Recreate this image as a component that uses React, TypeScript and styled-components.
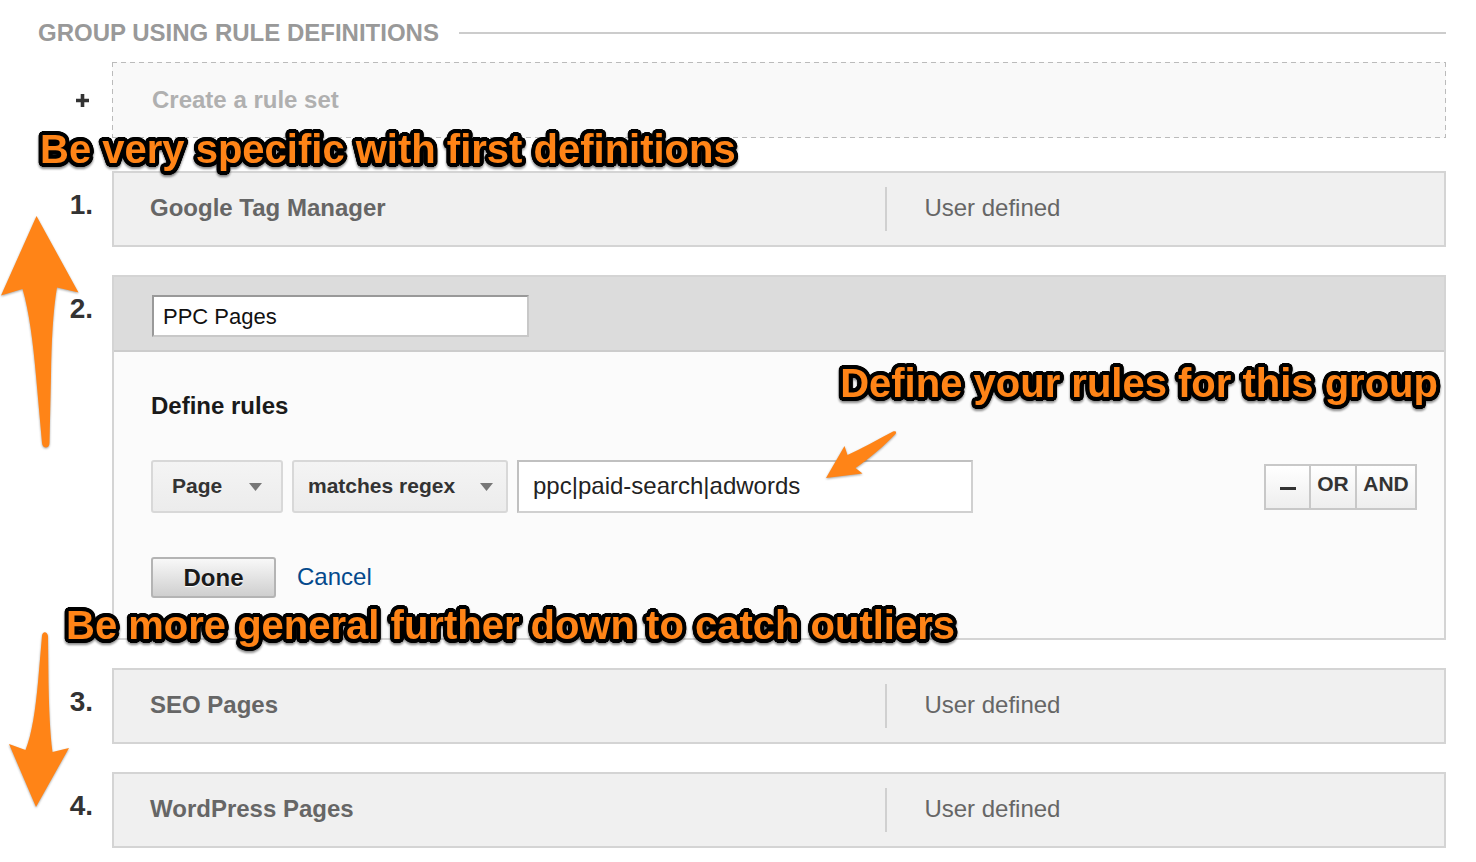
import React from "react";
import styled, { createGlobalStyle } from "styled-components";

const GlobalStyle = createGlobalStyle`
  *, *::before, *::after { box-sizing: border-box; }
  body {
    margin: 0;
    background: #fff;
    font-family: "Liberation Sans", Arial, Helvetica, sans-serif;
    color: #333;
  }
  button, input, select { font-family: inherit; margin: 0; }
`;

const Page = styled.main`
  position: relative;
  padding: 17px 30px 13px 38px;
`;

const SectionHeader = styled.header`
  display: flex;
  align-items: center;
  gap: 20px;
  margin-bottom: 13px;
  &::after {
    content: "";
    flex: 1;
    height: 2px;
    background: #ccc;
  }
`;

const SectionTitle = styled.h2`
  margin: 0;
  font-size: 24px;
  line-height: 32px;
  font-weight: bold;
  color: #999;
  text-transform: uppercase;
`;

const RuleList = styled.ol`
  list-style: none;
  margin: 0;
  padding: 0;
  display: flex;
  flex-direction: column;
  gap: 28px;
`;

const RuleItem = styled.li`
  position: relative;
  display: grid;
  grid-template-columns: 74px minmax(0, 1fr);
`;

const CreateItem = styled.div`
  position: relative;
  display: grid;
  grid-template-columns: 74px minmax(0, 1fr);
  margin-bottom: 33px;
`;

const Marker = styled.span`
  padding: 18px 19px 0 0;
  font-size: 28px;
  line-height: 32px;
  font-weight: bold;
  text-align: right;
  color: #333;
`;

const PlusIcon = styled.svg`
  width: 13px;
  height: 13px;
  margin-right: 23px;
  justify-self: end;
  align-self: center;
  fill: #333;
`;

const dashes = (direction: string) =>
  `repeating-linear-gradient(${direction}, #bbb 0 5px, transparent 5px 9px)`;

const CreateButton = styled.button`
  height: 76px;
  padding: 0 40px;
  border: 0;
  background:
    ${dashes("to right")} top / 100% 1px no-repeat,
    ${dashes("to right")} bottom / 100% 1px no-repeat,
    ${dashes("to bottom")} left / 1px 100% no-repeat,
    ${dashes("to bottom")} right / 1px 100% no-repeat,
    #f9f9f9;
  font-size: 24px;
  font-weight: bold;
  text-align: left;
  color: #b0b0b0;
`;

const RuleCard = styled.div`
  display: grid;
  grid-template-columns: 58fr 42fr;
  align-items: center;
  height: 76px;
  border: 2px solid #d4d4d4;
  background: #f0f0f0;
  font-size: 24px;
  line-height: 42px;
  color: #666;
`;

const RuleName = styled.strong`
  height: 44px;
  padding-left: 36px;
`;

const RuleKind = styled.span`
  height: 44px;
  padding-left: 37px;
  border-left: 2px solid #d0d0d0;
`;

const Editor = styled.form`
  border: 2px solid #d4d4d4;
  background: #fbfbfb;
`;

const EditorHeader = styled.div`
  height: 75px;
  padding: 18px 38px 0;
  border-bottom: 2px solid #ccc;
  background: #dcdcdc;
`;

const NameInput = styled.input`
  display: block;
  width: 377px;
  max-width: 100%;
  height: 42px;
  padding: 2px 9px 0;
  border: 2px solid;
  border-color: #999 #c8c8c8 #c8c8c8 #999;
  background: #fff;
  font-size: 22px;
  color: #111;
`;

const EditorBody = styled.div`
  padding: 38px 27px 40px 37px;
`;

const EditorTitle = styled.h3`
  margin: 0 0 38px;
  font-size: 24px;
  line-height: 32px;
  color: #1a1a1a;
`;

const RuleRow = styled.div`
  display: flex;
  align-items: center;
  gap: 9px;
  margin-bottom: 44px;
`;

const SelectBox = styled.span<{ $width: number }>`
  position: relative;
  flex: 0 1 ${(p) => p.$width}px;
`;

const Select = styled.select<{ $inset: number }>`
  appearance: none;
  display: block;
  width: 100%;
  height: 53px;
  padding: 0 24px 2px ${(p) => p.$inset}px;
  border: 2px solid #d8d8d8;
  border-radius: 3px;
  background: linear-gradient(#f4f4f4, #ececec);
  font-size: 21px;
  font-weight: bold;
  color: #333;
`;

const Caret = styled.svg<{ $inset: number }>`
  position: absolute;
  right: ${(p) => p.$inset}px;
  top: 23px;
  width: 13px;
  height: 8px;
  fill: #777;
  pointer-events: none;
`;

const PatternInput = styled.input`
  flex: 0 1 456px;
  min-width: 0;
  height: 53px;
  padding: 0 14px 2px;
  border: 2px solid;
  border-color: #c0c0c0 #d0d0d0 #d0d0d0 #c0c0c0;
  background: #fff;
  font-size: 24px;
  color: #222;
`;

const Operators = styled.div`
  display: flex;
  margin-left: auto;
  border: 2px solid #c8c8c8;
`;

const OperatorButton = styled.button<{ $width: number }>`
  width: ${(p) => p.$width}px;
  height: 42px;
  padding: 0 0 6px;
  border: 0;
  background: linear-gradient(#fff, #eee);
  font-size: 21px;
  font-weight: bold;
  color: #333;
  & + & { border-left: 2px solid #c8c8c8; }
`;

const MinusIcon = styled.svg`
  display: block;
  width: 16px;
  height: 4px;
  margin: 8px auto 0;
  fill: #333;
`;

const Actions = styled.div`
  display: flex;
  align-items: center;
  gap: 21px;
`;

const DoneButton = styled.button`
  width: 125px;
  height: 41px;
  padding: 0;
  border: 2px solid #b4b4b4;
  border-radius: 3px;
  background: linear-gradient(#f8f8f8, #cfcfcf);
  font-size: 24px;
  font-weight: bold;
  color: #1a1a1a;
  text-shadow: 0 1px 1px #fff;
`;

const CancelLink = styled.a`
  font-size: 24px;
  line-height: 38px;
  padding-bottom: 2px;
  color: #04498c;
  text-decoration: none;
`;

/* Rings of black shadows give the callout letters a thick, round outline. */
const outline = [2, 4]
  .flatMap((radius) =>
    Array.from({ length: 24 }, (_, i) => {
      const angle = (i * Math.PI) / 12;
      return `${(radius * Math.cos(angle)).toFixed(2)}px ${(radius * Math.sin(angle)).toFixed(2)}px 0 #000`;
    })
  )
  .join(", ");

const Callout = styled.p<{ $left?: number; $right?: number; $top: number }>`
  position: absolute;
  z-index: 2;
  top: ${(p) => p.$top}px;
  left: ${(p) => (p.$left === undefined ? "auto" : `${p.$left}px`)};
  right: ${(p) => (p.$right === undefined ? "auto" : `${p.$right}px`)};
  margin: 0;
  font-size: 40px;
  line-height: 48px;
  font-weight: bold;
  white-space: nowrap;
  color: #ff8417;
  text-shadow: ${outline};
  filter: drop-shadow(0 2px 1px rgba(0, 0, 0, 0.45));
  pointer-events: none;
`;

const Arrow = styled.svg<{ $left: number; $top: number }>`
  position: absolute;
  z-index: 1;
  left: ${(p) => p.$left}px;
  top: ${(p) => p.$top}px;
  fill: #ff8417;
  overflow: visible;
  filter: drop-shadow(0 1px 1px rgba(0, 0, 0, 0.35));
  pointer-events: none;
`;

type DropdownProps = {
  label: string;
  value: string;
  width: number;
  inset: number;
  caretInset: number;
};

function Dropdown({ label, value, width, inset, caretInset }: DropdownProps) {
  return (
    <SelectBox $width={width}>
      <Select aria-label={label} defaultValue={value} $inset={inset}>
        <option>{value}</option>
      </Select>
      <Caret $inset={caretInset} viewBox="0 0 13 8" aria-hidden="true">
        <path d="M0 0H13L6.5 8Z" />
      </Caret>
    </SelectBox>
  );
}

function SavedRule({ index, name, children }: { index: number; name: string; children?: React.ReactNode }) {
  return (
    <RuleItem>
      <Marker>{index}.</Marker>
      <RuleCard>
        <RuleName>{name}</RuleName>
        <RuleKind>User defined</RuleKind>
      </RuleCard>
      {children}
    </RuleItem>
  );
}

export default function App() {
  return (
    <>
      <GlobalStyle />
      <Page>
        <SectionHeader>
          <SectionTitle>Group using rule definitions</SectionTitle>
        </SectionHeader>

        <CreateItem>
          <PlusIcon viewBox="0 0 13 13" aria-hidden="true">
            <path d="M4.700 0H8.300V4.700H13V8.300H8.300V13H4.700V8.300H0V4.700H4.700Z" />
          </PlusIcon>
          <CreateButton type="button">Create a rule set</CreateButton>
          <Callout $left={2} $top={63}>Be very specific with first definitions</Callout>
        </CreateItem>

        <RuleList>
          <SavedRule index={1} name="Google Tag Manager">
            <Arrow $left={-38} $top={45} width="78" height="233" viewBox="0 0 78 233" aria-hidden="true">
              <path d="M36.500 0L78.500 76.500L57 71.500C53 95 51.500 125 51 160L49.500 227C49.500 233 42.500 233 42 227L36 160C33 125 29 95 22.500 73L1 79.500Z" />
            </Arrow>
          </SavedRule>

          <RuleItem>
            <Marker>2.</Marker>
            <Editor onSubmit={(e) => e.preventDefault()}>
              <EditorHeader>
                <NameInput aria-label="Rule set name" defaultValue="PPC Pages" />
              </EditorHeader>
              <EditorBody>
                <EditorTitle>Define rules</EditorTitle>
                <RuleRow>
                  <Dropdown label="Dimension" value="Page" width={132} inset={19} caretInset={21} />
                  <Dropdown label="Match type" value="matches regex" width={216} inset={14} caretInset={15} />
                  <PatternInput aria-label="Pattern" defaultValue="ppc|paid-search|adwords" />
                  <Operators>
                    <OperatorButton type="button" aria-label="Remove rule" $width={43}>
                      <MinusIcon viewBox="0 0 16 4" aria-hidden="true">
                        <rect y="1" width="16" height="3" />
                      </MinusIcon>
                    </OperatorButton>
                    <OperatorButton type="button" $width={46}>OR</OperatorButton>
                    <OperatorButton type="button" $width={60}>AND</OperatorButton>
                  </Operators>
                </RuleRow>
                <Actions>
                  <DoneButton type="submit">Done</DoneButton>
                  <CancelLink href="#">Cancel</CancelLink>
                </Actions>
              </EditorBody>
            </Editor>
            <Callout $right={8} $top={84}>Define your rules for this group</Callout>
            <Arrow $left={788} $top={156} width="70" height="48" viewBox="0 0 70 48" aria-hidden="true">
              <path d="M0 47L18.500 15L21.500 24C36 17.500 51 9 67 .5C69.500-.5 71 1 69.500 3C58 15 44 27 29.500 37L36.500 42.500Z" />
            </Arrow>
            <Callout $left={28} $top={326}>Be more general further down to catch outliers</Callout>
          </RuleItem>

          <SavedRule index={3} name="SEO Pages">
            <Arrow $left={-29} $top={-36} width="60" height="175" viewBox="0 0 60 175" aria-hidden="true">
              <path d="M27 175L60 116L43.500 120C41 102 40 75 39.500 50L39 4C38.500-.5 33.500-1.500 33 4L29 50C26.500 77 23 102 16.500 118L0 112Z" />
            </Arrow>
          </SavedRule>
          <SavedRule index={4} name="WordPress Pages" />
        </RuleList>
      </Page>
    </>
  );
}
